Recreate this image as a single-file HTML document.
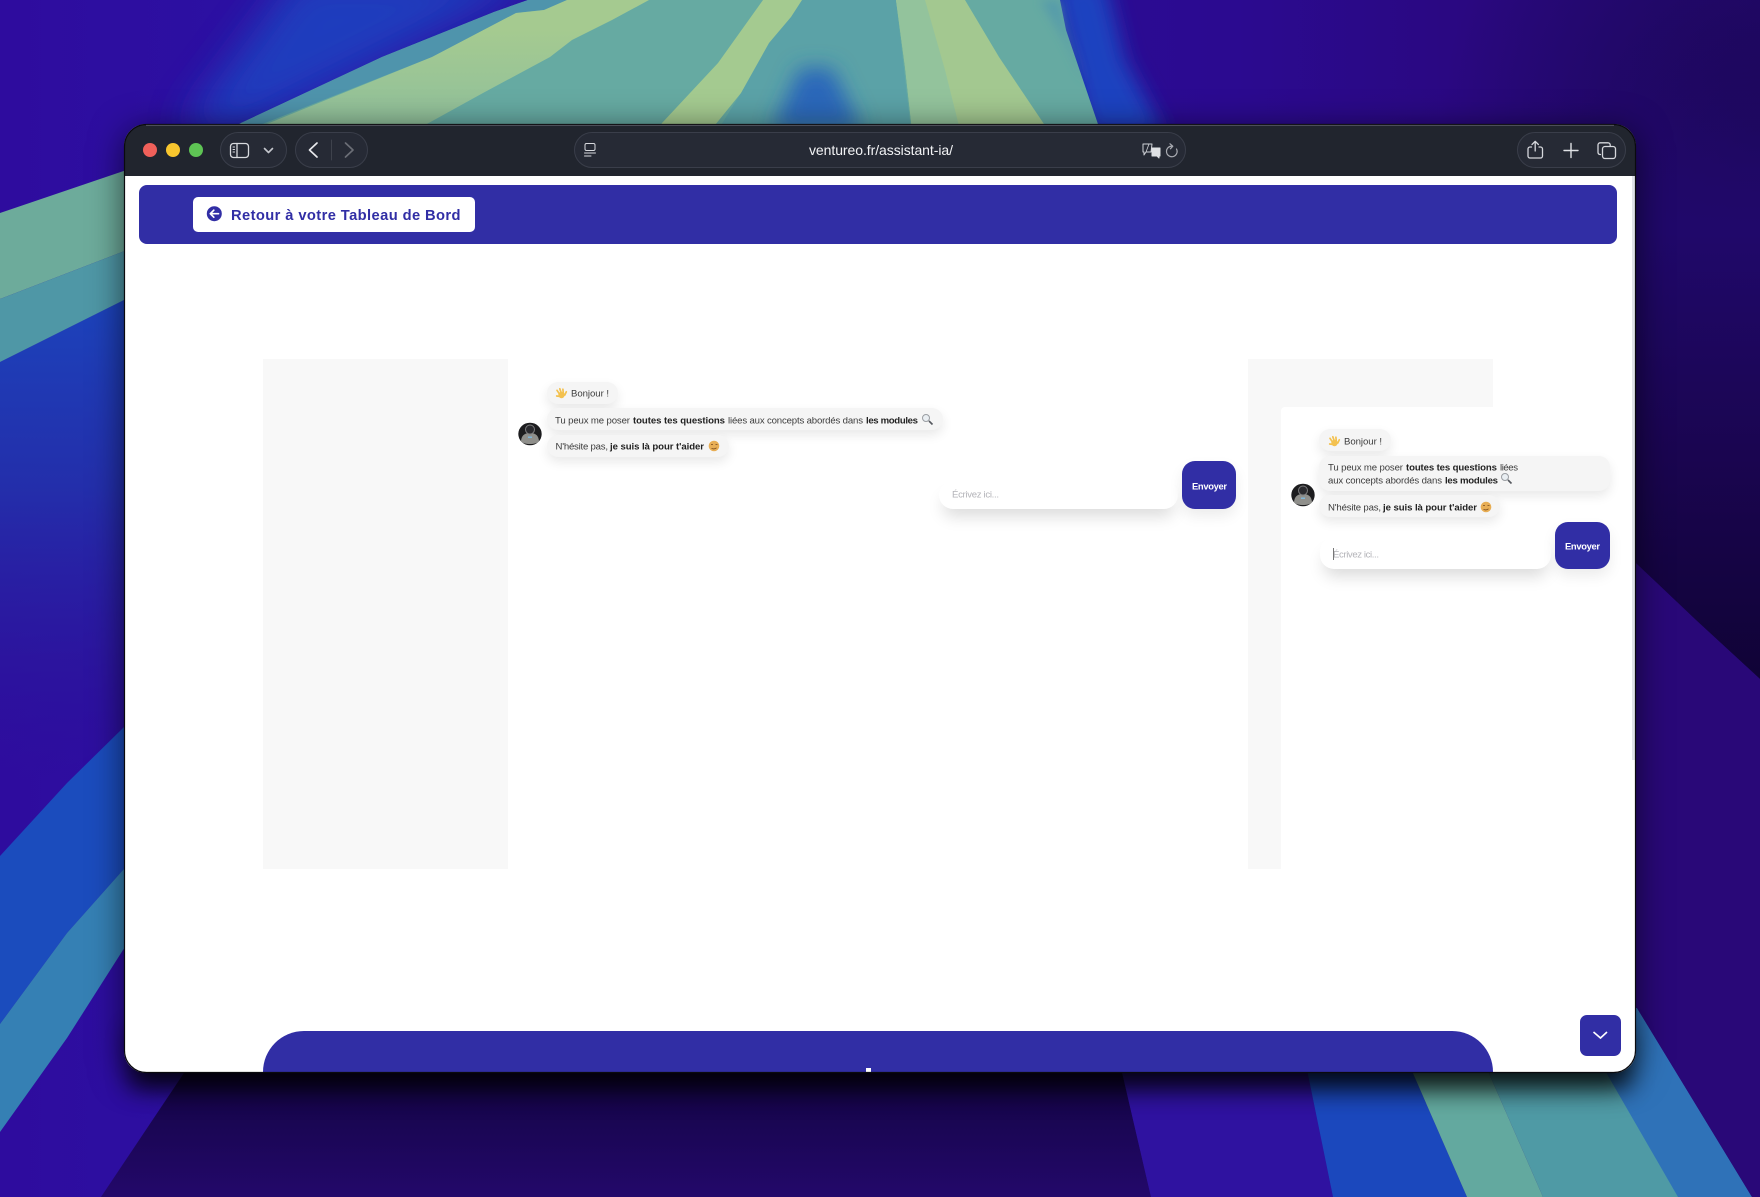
<!DOCTYPE html>
<html lang="fr">
<head>
<meta charset="utf-8">
<title>ventureo.fr/assistant-ia/</title>
<style>
html,body{margin:0;padding:0;width:1760px;height:1197px;overflow:hidden;background:#1a0552;font-family:"Liberation Sans",sans-serif}
.a{position:absolute;display:block}
svg.a{left:0;top:0}
.win{left:124px;top:124px;width:1512px;height:949px;border-radius:22px;box-shadow:0 6px 34px rgba(0,0,0,.6)}
.winin{left:124px;top:124px;width:1512px;height:949px;border-radius:22px;overflow:hidden;background:#fff}
.bar{left:0;top:0;width:1512px;height:52px;background:#21252e}
.scr{left:1508px;top:52px;width:4px;height:584px;background:#e0e3e8}
.pill{background:#262a35;border:1px solid #3a3e4a;box-sizing:border-box;border-radius:18px}
.hdr{left:15px;top:61px;width:1478px;height:59px;border-radius:8px;background:#312ea5}
.btn{left:69px;top:73px;width:282px;height:35px;border-radius:5px;background:#fff}
.btxt{left:107px;top:74px;height:35px;line-height:37px;font-weight:700;font-size:14.7px;letter-spacing:.41px;color:#312ea5;white-space:nowrap}
.gray{background:#f8f8f8}
.bub{background:#f5f5f5;border-radius:11px;box-shadow:0 5px 11px rgba(0,0,0,.09)}
.inp{background:#fff;border-radius:14px;box-shadow:0 11px 16px -4px rgba(0,0,0,.15)}
.send{background:#312ea5;border-radius:13px;box-shadow:0 7px 14px rgba(0,0,0,.08)}
.top{left:1456px;top:891px;width:41px;height:41px;border-radius:7px;background:#312ea5}
.foot{left:139px;top:907px;width:1230px;height:80px;border-radius:41px 41px 0 0;background:#312ea5}
.line{left:139px;top:948px;width:1230px;height:1px;background:#6a68c0}
.mark{left:742px;top:944px;width:5px;height:5px;background:#fff}
</style>
</head>
<body>
<svg class="a" width="1760" height="1197" viewBox="0 0 1760 1197" xmlns="http://www.w3.org/2000/svg">
<defs>
<linearGradient id="base" x1="0" x2="1" y1="0" y2="0"><stop offset="0" stop-color="#2e0c9e"/><stop offset=".2" stop-color="#2b12a4"/><stop offset=".7" stop-color="#2b0a90"/><stop offset=".84" stop-color="#2a0880"/><stop offset="1" stop-color="#240874"/></linearGradient>
<linearGradient id="lblue" gradientUnits="userSpaceOnUse" x1="0" x2="0" y1="292" y2="780"><stop offset="0" stop-color="#1c44bc"/><stop offset=".4" stop-color="#2232ac" stop-opacity=".9"/><stop offset=".75" stop-color="#2a1a9e" stop-opacity=".6"/><stop offset="1" stop-color="#2c109a" stop-opacity="0"/></linearGradient>
<linearGradient id="rdark" gradientUnits="userSpaceOnUse" x1="0" x2="0" y1="40" y2="680"><stop offset="0" stop-color="#21086a" stop-opacity="0"/><stop offset=".3" stop-color="#20086a"/><stop offset=".65" stop-color="#1a0550"/><stop offset="1" stop-color="#100336"/></linearGradient>
<radialGradient id="tr" gradientUnits="userSpaceOnUse" cx="1760" cy="130" r="320"><stop offset="0" stop-color="#1c0758"/><stop offset="1" stop-color="#1c0758" stop-opacity="0"/></radialGradient>
<linearGradient id="bdark" gradientUnits="userSpaceOnUse" x1="0" x2="0" y1="1060" y2="1197"><stop offset="0" stop-color="#120440"/><stop offset="1" stop-color="#23086a"/></linearGradient>
<linearGradient id="gr1" gradientUnits="userSpaceOnUse" x1="0" x2="0" y1="30" y2="124"><stop offset="0" stop-color="#a5ca90"/><stop offset="1" stop-color="#90c09b"/></linearGradient>
<filter id="b5" x="-50%" y="-30%" width="200%" height="160%"><feGaussianBlur stdDeviation="5"/></filter>
<filter id="b10" x="-50%" y="-50%" width="200%" height="200%"><feGaussianBlur stdDeviation="10"/></filter>
<filter id="b12" x="-5%" y="-100%" width="110%" height="300%"><feGaussianBlur stdDeviation="12"/></filter>
<filter id="b20" x="-60%" y="-60%" width="220%" height="220%"><feGaussianBlur stdDeviation="20"/></filter>
</defs>
<rect width="1760" height="1197" fill="url(#base)"/>
<rect x="1400" y="0" width="360" height="460" fill="url(#tr)"/>
<!-- top blue glow -->
<polygon points="300,-30 540,-30 500,0 241,130 180,130" fill="#1d44c2" opacity=".85" filter="url(#b20)"/>
<polygon points="1050,-20 1105,-20 1125,60 1165,135 1090,135" fill="#1c42c0" filter="url(#b10)"/>
<!-- top rays -->
<polygon points="528,0 1060,0 1066,30 1100,130 228,130 241,123 382,57 494,12" fill="#66aaa2"/>
<polygon points="528,0 567,0 544,10 516,13 432,57 260,125 241,123 382,57 494,12" fill="#4f94ac"/>
<polygon points="802,0 896,0 911,130 718,130 741,93 769,43" fill="#5ba2a7"/>
<polygon points="800,68 832,68 862,130 772,130" fill="#2c68ba" filter="url(#b10)"/>
<polygon points="567,0 649,0 612,20 572,40 550,57 483,93 416,130 252,130 432,57 516,13 544,10" fill="url(#gr1)"/>
<polygon points="763,0 802,0 791,17 769,43 741,93 711,130 658,130 662,123 718,63" fill="#a4ca90"/>
<polygon points="896,0 965,0 999,57 1048,130 912,130 905,67" fill="#a3c890"/>
<polygon points="896,0 925,0 945,70 960,130 912,130 905,67" fill="#93c39c"/>
<polygon points="1040,0 1060,0 1066,30 1085,85 1065,40" fill="#4f95ae" opacity=".7" filter="url(#b5)"/>
<!-- left bands -->
<polygon points="0,362 200,262 200,700 0,800" fill="url(#lblue)"/>
<polygon points="0,213 200,145 200,222 0,299" fill="#6dab9b"/>
<polygon points="0,299 200,222 200,262 0,362" fill="#4f97a6"/>
<polygon points="0,856 67,783 123,728 200,650 200,790 123,870 67,933 0,1024" fill="#1b4cbd"/>
<polygon points="0,1024 67,933 123,870 200,790 200,860 123,950 67,1038 0,1132" fill="#3580b4"/>
<!-- bottom -->
<polygon points="101,1197 196,1055 1118,1055 1151,1197" fill="url(#bdark)"/>
<polygon points="1118,1055 1304,1055 1333,1197 1151,1197" fill="#2f12a0"/>
<polygon points="1304,1055 1405,1055 1467,1197 1333,1197" fill="#1b48bd"/>
<polygon points="1500,1000 1637,1008 1752,1197 1600,1197" fill="#2f72b8"/>
<polygon points="1481,1055 1596,1055 1678,1197 1543,1197" fill="#4f9aa5"/>
<polygon points="1405,1055 1481,1055 1543,1197 1467,1197" fill="#63a99f"/>
<!-- right -->
<polygon points="1620,40 1760,40 1760,679 1697,621 1620,548" fill="url(#rdark)"/>
<polygon points="1620,548 1697,621 1760,679 1760,1197 1752,1197 1637,1008 1620,990" fill="#290878"/>
<!-- bottom window shadow -->
<rect x="130" y="1030" width="1500" height="58" fill="#000" opacity=".75" filter="url(#b12)"/>
</svg>

<div class="a win"></div>
<div class="a winin">
  <div class="a bar"></div>
  <div class="a pill" style="left:96px;top:8px;width:67px;height:36px"></div>
  <div class="a pill" style="left:171px;top:8px;width:73px;height:36px"></div>
  <div class="a pill" style="left:450px;top:8px;width:612px;height:36px"></div>
  <div class="a pill" style="left:1393px;top:8px;width:109px;height:36px"></div>
  <div class="a scr"></div>
  <div class="a hdr"></div>
  <div class="a btn"></div>
  <div class="a btxt">Retour à votre Tableau de Bord</div>

  <div class="a gray" style="left:139px;top:235px;width:245px;height:510px"></div>
  <div class="a gray" style="left:1124px;top:235px;width:245px;height:510px"></div>
  <div class="a" style="left:1157px;top:283px;width:340px;height:600px;background:#fff;border-radius:4px"></div>

  <!-- left chat -->
  <div class="a bub" style="left:423px;top:258px;width:71px;height:22px"></div>
  <div class="a bub" style="left:423px;top:284px;width:396px;height:22px"></div>
  <div class="a bub" style="left:423px;top:311px;width:182px;height:22px"></div>
  <div class="a inp" style="left:815px;top:357px;width:239px;height:28px"></div>
  <div class="a send" style="left:1058px;top:337px;width:54px;height:48px"></div>

  <!-- right chat -->
  <div class="a bub" style="left:1195px;top:305px;width:72px;height:22px"></div>
  <div class="a bub" style="left:1195px;top:332px;width:291px;height:35px"></div>
  <div class="a bub" style="left:1195px;top:371px;width:181px;height:22px"></div>
  <div class="a inp" style="left:1196px;top:413px;width:231px;height:32px"></div>
  <div class="a send" style="left:1431px;top:398px;width:55px;height:47px"></div>

  <div class="a top"></div>
  <div class="a foot"></div>
  <div class="a line"></div>
  <div class="a mark"></div>
</div>

<svg class="a" width="1760" height="1197" viewBox="0 0 1760 1197" xmlns="http://www.w3.org/2000/svg" font-family="'Liberation Sans',sans-serif">
<!-- window edge -->
<rect x="124.500" y="124.500" width="1511" height="948" rx="22" fill="none" stroke="#0a0a0e" stroke-width="1.200"/>
<path d="M146 125.300H1614" stroke="#5a5d66" stroke-width=".8"/>
<!-- traffic lights -->
<circle cx="150" cy="150" r="7" fill="#f0605a"/><circle cx="173" cy="150" r="7" fill="#f8c62e"/><circle cx="196" cy="150" r="7" fill="#5ec454"/>
<!-- sidebar icon -->
<g fill="none" stroke="#d8dade" stroke-width="1.300" stroke-linecap="round" stroke-linejoin="round">
<rect x="230.500" y="143.500" width="18" height="14" rx="3"/><path d="M237 143.500V157.500"/>
<path d="M233 147h1.600M233 149.500h1.600M233 152h1.600" stroke-width="1"/>
<path d="M264.500 148.500L268.500 152.500L272.500 148.500" stroke="#c4c6cc" stroke-width="1.600"/>
<path d="M317 143L309.500 150L317 157" stroke="#e8e9ec" stroke-width="1.700"/>
<path d="M345.500 143L353 150L345.500 157" stroke="#6b6e76" stroke-width="1.700"/>
<path d="M331.500 140V160" stroke="#3e424c" stroke-width="1"/>
<!-- url icon -->
<rect x="585" y="143.500" width="10" height="7" rx="1.500" stroke-width="1"/>
<path d="M584.500 153H595.500M584.500 156H591" stroke-width="1"/>
<!-- translate -->
<path d="M1143 144h9l-1 8h-5l-2 3v-3h-1z" stroke="#cfd1d6" stroke-width="1"/>
<path d="M1149 144L1146 152" stroke="#cfd1d6" stroke-width=".8"/>
<path d="M1152 148h8v8h-1v2l-2-2h-5z" fill="#dfe1e5" stroke="#dfe1e5" stroke-width="1"/>
<!-- reload -->
<path d="M1176.500 149a5.300 5.300 0 1 1-4-2.800" stroke="#a9abb2" stroke-width="1.200"/><path d="M1170 143.800l2.800 2.400-2.400 2.600" stroke="#a9abb2" stroke-width="1.200"/>
<!-- share -->
<path d="M1531.500 147h-1.500a2 2 0 0 0-2 2v7a2 2 0 0 0 2 2h10.500a2 2 0 0 0 2-2v-7a2 2 0 0 0-2-2h-1.500M1535.200 151V141.500M1532 144.500l3.200-3.200 3.200 3.200" stroke="#d5d7dc" stroke-width="1.300"/>
<!-- plus -->
<path d="M1571 143.500V157.500M1564 150.500H1578" stroke="#e0e2e6" stroke-width="1.400"/>
<!-- tabs -->
<path d="M1600.500 154.500h-.5a2.200 2.200 0 0 1-2-2v-7.500a2.200 2.200 0 0 1 2-2.200h8a2.200 2.200 0 0 1 2.200 2.200v1" stroke="#d5d7dc" stroke-width="1.300"/>
<rect x="1602.500" y="146.500" width="13" height="12" rx="2.500" stroke="#d5d7dc" stroke-width="1.300"/>
</g>
<text x="809" y="155" font-size="14" fill="#f2f3f5" textLength="144">ventureo.fr/assistant-ia/</text>

<!-- back icon -->
<circle cx="214.300" cy="213.700" r="7.500" fill="#312ea5"/>
<path d="M218.500 213.700H210.500M213.800 210.200L210.300 213.700L213.800 217.200" fill="none" stroke="#fff" stroke-width="1.700" stroke-linecap="round" stroke-linejoin="round"/>

<!-- avatars -->
<g id="av">
<ellipse cx="530" cy="434" rx="11.700" ry="11.300" fill="#1d1d1f"/>
<path d="M521 441c.5-5 3-8 9-8s8.500 3 9 8c-2 4-16 4-18 0z" fill="#8f8f8b"/>
<circle cx="530" cy="429.500" r="4.500" fill="#2a2a2e" stroke="#7c7c7e" stroke-width="1"/>
<rect x="528" y="436.500" width="4" height="1.500" fill="#7fb6d8"/>
</g>
<use href="#av" x="773" y="61"/>

<!-- emoji drawings -->
<g id="hand" fill="none" stroke="#f3c14f" stroke-linecap="round"><circle cx="561.500" cy="395" r="3.200" fill="#f3c14f" stroke="none"/><path d="M559.500 394L557 390.300M561.300 393L559.800 388.800M563.300 393.300L562.900 389.200M564.800 395L566.300 391.800M558.800 396.300L556.700 396" stroke-width="1.700"/></g>
<use href="#hand" x="773" y="48"/>
<g id="mag" fill="none"><circle cx="926" cy="418" r="3.500" fill="#e9eef2" stroke="#9a9da2" stroke-width="1"/><path d="M929 421l3.500 3.500" stroke="#55585e" stroke-width="1.600"/></g>
<use href="#mag" x="579" y="59"/>
<g id="sm"><circle cx="714" cy="446" r="5.300" fill="#e8ae55"/><path d="M711 444.500h2M715.500 444.500h2" stroke="#7a4a1e" stroke-width=".8"/><path d="M711.500 448.300c1.500.8 3.500.8 5-.5" stroke="#7a4a1e" stroke-width=".8" fill="none"/></g>
<use href="#sm" x="772" y="61"/>

<!-- chat text left -->
<g font-size="9.600" fill="#3c3c3c">
<text x="571" y="396.500" textLength="38">Bonjour !</text>
<text x="555" y="423.500" textLength="75">Tu peux me poser</text>
<text x="633" y="423.500" textLength="92" font-weight="700" fill="#222">toutes tes questions</text>
<text x="728" y="423.500" textLength="135">liées aux concepts abordés dans</text>
<text x="866" y="423.500" textLength="52" font-weight="700" fill="#222">les modules</text>
<text x="555.500" y="449.500" textLength="52.500">N'hésite pas,</text>
<text x="610" y="449.500" textLength="94" font-weight="700" fill="#222">je suis là pour t'aider</text>
<!-- chat text right -->
<text x="1344" y="444.500" textLength="38">Bonjour !</text>
<text x="1328" y="470.500" textLength="75">Tu peux me poser</text>
<text x="1406" y="470.500" textLength="91" font-weight="700" fill="#222">toutes tes questions</text>
<text x="1500" y="470.500" textLength="18">liées</text>
<text x="1328" y="483.500" textLength="114">aux concepts abordés dans</text>
<text x="1445" y="483.500" textLength="53" font-weight="700" fill="#222">les modules</text>
<text x="1328" y="510.500" textLength="53">N'hésite pas,</text>
<text x="1383" y="510.500" textLength="94" font-weight="700" fill="#222">je suis là pour t'aider</text>
</g>
<g font-size="9.600" fill="#b3b3b8">
<text x="952" y="497.500" textLength="47">Écrivez ici...</text>
<text x="1333" y="557.500" textLength="46">Écrivez ici...</text>
</g>
<rect x="1333" y="548" width="1" height="12" fill="#777"/>
<g font-size="9.400" font-weight="700" fill="#fff">
<text x="1192" y="489.500" textLength="35">Envoyer</text>
<text x="1565" y="549.500" textLength="35">Envoyer</text>
</g>
<!-- scroll button chevron -->
<path d="M1593.500 1032L1600.500 1038L1607 1032" fill="none" stroke="#fff" stroke-width="1.600"/>
</svg>
</body>
</html>
